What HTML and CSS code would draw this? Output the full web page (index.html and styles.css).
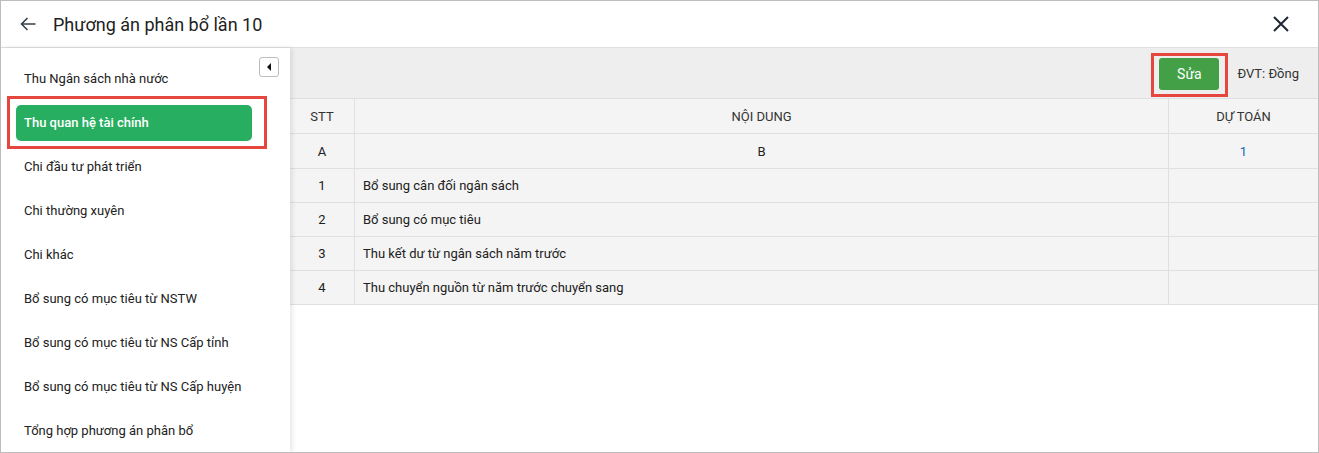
FILE: index.html
```html
<!DOCTYPE html>
<html lang="vi">
<head>
    <meta charset="UTF-8">
    <title>Phương án phân bổ lần 10</title>
    <link rel="stylesheet" href="styles.css">
</head>
<body>
<div class="dialog">
    <div class="header">
        <div class="back">
            <svg width="16" height="14" viewBox="0 0 16 14"><path d="M15.5 7H1.5M7.5 1L1.5 7l6 6" fill="none" stroke="#37404a" stroke-width="1.6"/></svg>
        </div>
        <div class="title">Phương án phân bổ lần 10</div>
        <div class="close">
            <svg width="16" height="16" viewBox="0 0 16 16"><path d="M1 1l14 14M15 1L1 15" fill="none" stroke="#1f2633" stroke-width="2"/></svg>
        </div>
    </div>
    <div class="content">
        <div class="sidebar">
            <div class="collapse"><span class="tri"></span></div>
            <div class="nav-item">Thu Ngân sách nhà nước</div>
            <div class="nav-item active">Thu quan hệ tài chính</div>
            <div class="nav-item">Chi đầu tư phát triển</div>
            <div class="nav-item">Chi thường xuyên</div>
            <div class="nav-item">Chi khác</div>
            <div class="nav-item">Bổ sung có mục tiêu từ NSTW</div>
            <div class="nav-item">Bổ sung có mục tiêu từ NS Cấp tỉnh</div>
            <div class="nav-item">Bổ sung có mục tiêu từ NS Cấp huyện</div>
            <div class="nav-item">Tổng hợp phương án phân bổ</div>
        </div>
        <div class="main">
            <div class="toolbar">
                <button class="btn-edit">Sửa</button>
                <span class="unit">ĐVT: Đồng</span>
            </div>
            <table class="grid">
                <thead>
                    <tr>
                        <th class="col-stt">STT</th>
                        <th>NỘI DUNG</th>
                        <th class="col-val">DỰ TOÁN</th>
                    </tr>
                </thead>
                <tbody>
                    <tr class="row-code">
                        <td class="center">A</td>
                        <td class="center">B</td>
                        <td class="center num">1</td>
                    </tr>
                    <tr><td class="center">1</td><td>Bổ sung cân đối ngân sách</td><td></td></tr>
                    <tr><td class="center">2</td><td>Bổ sung có mục tiêu</td><td></td></tr>
                    <tr><td class="center">3</td><td>Thu kết dư từ ngân sách năm trước</td><td></td></tr>
                    <tr><td class="center">4</td><td>Thu chuyển nguồn từ năm trước chuyển sang</td><td></td></tr>
                </tbody>
            </table>
        </div>
    </div>
</div>
</body>
</html>
```

FILE: styles.css
```css
/*Page*/
html, body {
    margin: 0;
    padding: 0;
    height: 100%;
}

body {
    font-family: Roboto, "Liberation Sans", sans-serif;
    color: #212121;
    background-color: white;
}

.dialog {
    height: 453px;
    box-sizing: border-box;
    border: 1px solid #bdbdbd;
    display: flex;
    flex-direction: column;
    overflow: hidden;
}

/*Header*/
.header {
    height: 46px;
    flex-shrink: 0;
    display: flex;
    flex-direction: row;
    align-items: center;
    padding: 0 29px 0 19px;
    border-bottom: 1px solid #e0e0e0;
}

.back {
    width: 16px;
    height: 14px;
    display: flex;
}

.title {
    margin-left: 17px;
    font-size: 18px;
    color: #212121;
    flex: 1;
}

.close {
    width: 16px;
    height: 16px;
    display: flex;
}

/*Body*/
.content {
    flex: 1;
    display: flex;
    flex-direction: row;
    min-height: 0;
}

.sidebar {
    width: 289px;
    flex-shrink: 0;
    padding-top: 13px;
    box-sizing: border-box;
    background-color: white;
    box-shadow: 2px 0 5px rgba(0, 0, 0, 0.1);
    position: relative;
    z-index: 1;
}

.collapse {
    position: absolute;
    top: 9px;
    left: 258px;
    width: 18px;
    height: 18px;
    border: 1px solid #bdbdbd;
    border-radius: 3px;
    background-color: white;
    display: flex;
    align-items: center;
    justify-content: center;
}

.tri {
    width: 0;
    height: 0;
    border-top: 4px solid transparent;
    border-bottom: 4px solid transparent;
    border-right: 4px solid #111;
    margin-left: -1px;
}

.nav-item {
    height: 36px;
    line-height: 36px;
    margin: 0 38px 8px 15px;
    padding-left: 8px;
    font-size: 13px;
    color: #212121;
    border-radius: 5px;
    position: relative;
}

.nav-item.active {
    background-color: #27ae60;
    color: white;
    font-weight: 500;
}

.nav-item.active::after {
    content: "";
    position: absolute;
    left: -9px;
    right: -15px;
    top: -9px;
    bottom: -8px;
    border: 3px solid #e5473f;
}

.main {
    flex: 1;
    display: flex;
    flex-direction: column;
    background-color: white;
}

.toolbar {
    height: 50px;
    flex-shrink: 0;
    background-color: #eeeeee;
    display: flex;
    flex-direction: row;
    justify-content: flex-end;
    align-items: center;
    padding-right: 19px;
}

.btn-edit {
    width: 60px;
    height: 32px;
    border: none;
    border-radius: 3px;
    background-color: #43a047;
    color: white;
    font-family: Roboto, "Liberation Sans", sans-serif;
    font-size: 14px;
    margin-right: 18px;
    margin-top: 1px;
    position: relative;
}

.btn-edit::after {
    content: "";
    position: absolute;
    left: -8px;
    right: -9px;
    top: -5px;
    bottom: -7px;
    border: 3px solid #e5473f;
}

.unit {
    font-size: 13px;
    color: #333;
}

/*Table*/
.grid {
    width: 100%;
    border-collapse: collapse;
    font-size: 13px;
    color: #212121;
}

.grid th, .grid td {
    background-color: #f4f4f4;
    border-top: 1px solid #dfe0e4;
    border-bottom: 1px solid #dfe0e4;
    height: 33px;
    padding: 0 8px;
}

.grid th {
    font-weight: normal;
    height: 34px;
    color: #333;
}

.grid .row-code td {
    height: 34px;
}

.grid th + th, .grid td + td {
    border-left: 1px solid #dfe0e4;
}

.col-stt {
    width: 48px;
}

.col-val {
    width: 133px;
}

.center {
    text-align: center;
}

.num {
    color: #1565c0;
}
```
